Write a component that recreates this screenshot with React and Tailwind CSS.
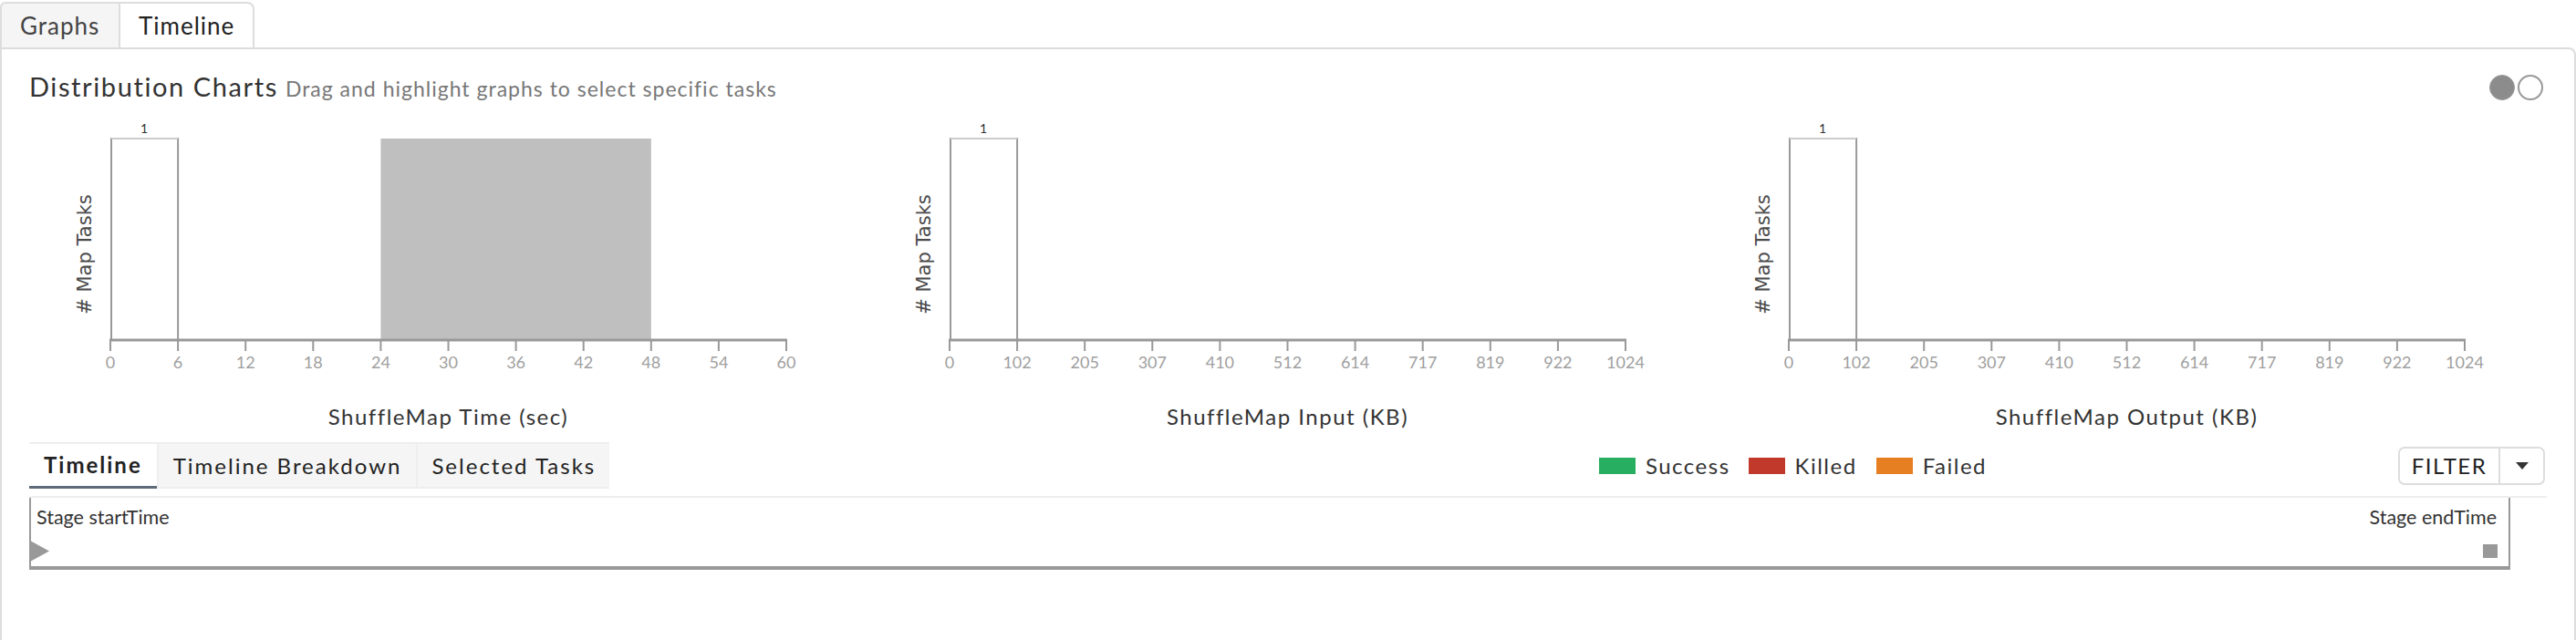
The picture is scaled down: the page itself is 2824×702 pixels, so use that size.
import React from "react";

const X0 = 89;
const X1 = 830;
const AY = 245;
const TOP = 24;
const STEP = (X1 - X0) / 10;

function Chart({ ticks, selection, label }) {
  return (
    <svg width="920" height="345" viewBox="0 0 920 345">
      {selection && (
        <rect
          x={X0 + selection[0] * STEP}
          y={TOP}
          width={(selection[1] - selection[0]) * STEP}
          height={AY - TOP}
          fill="#bfbfbf"
        />
      )}
      <rect x={X0 + 1} y={TOP} width={STEP - 1} height={AY - TOP} fill="#ffffff" stroke="#999999" strokeWidth="2" />
      <line x1={X0 + 1} x2={X0 + STEP} y1={TOP} y2={TOP} stroke="#cccccc" strokeWidth="2" />
      <text x={X0 + STEP / 2} y={TOP - 6} textAnchor="middle" fontSize="14" fill="#333333" fontFamily="Lato, sans-serif">
        1
      </text>
      <line x1={X0 - 1} x2={X1 + 1} y1={AY} y2={AY} stroke="#999999" strokeWidth="3" />
      {ticks.map((t, i) => (
        <g key={i}>
          <line x1={X0 + i * STEP} x2={X0 + i * STEP} y1={AY} y2={AY + 12} stroke="#999999" strokeWidth="2" />
          <text
            x={X0 + i * STEP}
            y={AY + 31}
            textAnchor="middle"
            fontSize="18"
            fill="#a0a0a0"
            fontFamily="Lato, sans-serif"
          >
            {t}
          </text>
        </g>
      ))}
      <text
        x={(X0 + X1) / 2}
        y={338}
        textAnchor="middle"
        fontSize="24"
        letterSpacing="1.5"
        fill="#333333"
        fontFamily="Lato, sans-serif"
      >
        {label}
      </text>
      <text
        transform="translate(68 151) rotate(-90)"
        textAnchor="middle"
        fontSize="21"
        fill="#4a4a4a"
        fontFamily="'DejaVu Sans', sans-serif"
      >
        # Map Tasks
      </text>
    </svg>
  );
}

const kb = ["0", "102", "205", "307", "410", "512", "614", "717", "819", "922", "1024"];
const sec = ["0", "6", "12", "18", "24", "30", "36", "42", "48", "54", "60"];

export default function App() {
  return (
    <div className="w-[2824px] h-[702px] bg-white font-['Lato',sans-serif] text-[#333] overflow-hidden">
      {/* top tabs */}
      <div className="flex h-[52px] items-end">
        <div className="w-[132px] h-[50px] border-t-2 border-l-2 border-r-2 border-[#dddddd] rounded-tl-[6px] bg-[#f5f5f5] flex items-center pl-[20px] text-[26px] tracking-[1px] text-[#444]">
          Graphs
        </div>
        <div className="w-[147px] h-[50px] border-t-2 border-r-2 border-[#dddddd] rounded-tr-[8px] bg-white flex items-center pl-[20px] text-[26px] tracking-[1px] text-[#222]">
          Timeline
        </div>
      </div>

      {/* panel */}
      <div className="h-[650px] border-2 border-b-0 border-[#dddddd] rounded-tr-[8px] px-[30px]">
        {/* header */}
        <div className="flex items-center justify-between h-[34px] mt-[25px]">
          <div className="flex items-baseline">
            <span className="text-[29px] leading-[34px] tracking-[1.6px] text-[#333]">Distribution Charts</span>
            <span className="ml-[8px] text-[23px] leading-[34px] tracking-[1px] text-[#777]">
              Drag and highlight graphs to select specific tasks
            </span>
          </div>
          <div className="flex items-center gap-[3px] mr-[4px]">
            <div className="w-[28px] h-[28px] rounded-full bg-[#8c8c8c] border border-[#9a9a9a]" />
            <div className="w-[28px] h-[28px] rounded-full bg-white border-2 border-[#999]" />
          </div>
        </div>

        {/* charts */}
        <div className="grid grid-cols-3 mt-[15px] h-[345px]">
          <Chart ticks={sec} selection={[4, 8]} label="ShuffleMap Time (sec)" />
          <Chart ticks={kb} label="ShuffleMap Input (KB)" />
          <Chart ticks={kb} label="ShuffleMap Output (KB)" />
        </div>

        {/* sub tabs row */}
        <div className="flex items-center mt-[12px] h-[51px]">
          <div className="flex h-[51px] bg-[#eeeeee] pt-[2px] gap-[2px]">
            <div className="bg-white h-[49px] px-[16px] flex items-center font-bold text-[24px] tracking-[2px] text-[#222] border-b-[3px] border-[#5f6b7a]">
              Timeline
            </div>
            <div className="bg-[#f5f5f5] h-[47px] px-[16px] flex items-center text-[24px] tracking-[2px] text-[#222]">
              Timeline Breakdown
            </div>
            <div className="bg-[#f5f5f5] h-[47px] px-[15px] flex items-center text-[24px] tracking-[2px] text-[#222]">
              Selected Tasks
            </div>
          </div>

          <div className="ml-auto mr-[451px] flex items-center text-[24px] tracking-[1.5px] text-[#333]">
            <div className="w-[40px] h-[18px] bg-[#27ae60]" />
            <span className="ml-[11px]">Success</span>
            <div className="ml-[20px] w-[40px] h-[18px] bg-[#c0392b]" />
            <span className="ml-[11px]">Killed</span>
            <div className="ml-[21px] w-[40px] h-[18px] bg-[#e67e22]" />
            <span className="ml-[11px]">Failed</span>
          </div>

          <div className="flex h-[42px] border-2 border-[#dddddd] rounded-[7px] mr-[2px]">
            <div className="w-[108px] flex items-center justify-center text-[24px] tracking-[1.5px] text-[#222]">FILTER</div>
            <div className="w-[49px] border-l-2 border-[#dddddd] flex items-center justify-center">
              <svg width="14" height="8" viewBox="0 0 14 8">
                <path d="M0 0 L14 0 L7 8 Z" fill="#333" />
              </svg>
            </div>
          </div>
        </div>

        {/* timeline box */}
        <div className="mt-[8px] border-t-2 border-[#eeeeee]">
          <div className="mr-[40px] h-[79px] border-l-2 border-r-2 border-b-4 border-[#999999] flex flex-col">
            <div className="flex justify-between h-[24px] mt-[9px] text-[21.5px] leading-[24px] text-[#333]">
              <span className="pl-[6px]">Stage startTime</span>
              <span className="pr-[13px]">Stage endTime</span>
            </div>
            <div className="flex justify-between items-start">
              <svg width="21" height="23" viewBox="0 0 21 23" className="mt-[14px] -ml-px">
                <path d="M0 0 L21 11.5 L0 23 Z" fill="#999999" />
              </svg>
              <div className="mt-[18px] mr-[12px] w-[16px] h-[15px] bg-[#999999]" />
            </div>
          </div>
        </div>
      </div>
    </div>
  );
}
